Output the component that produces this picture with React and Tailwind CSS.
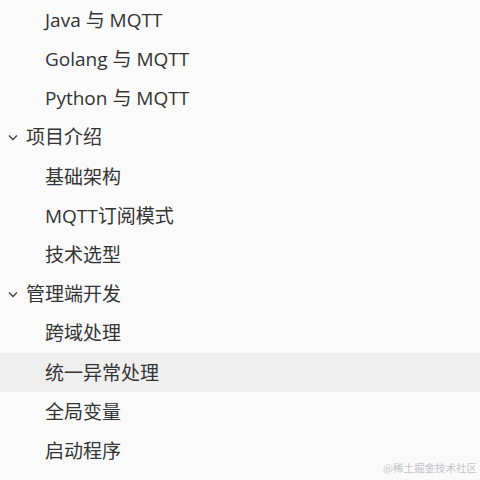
import React from "react";

const font = { fontFamily: '"Open Sans", "Noto Sans CJK SC", sans-serif' };

const rows = [
  { t: "Java 与 MQTT", lvl: 1 },
  { t: "Golang 与 MQTT", lvl: 1 },
  { t: "Python 与 MQTT", lvl: 1 },
  { t: "项目介绍", lvl: 0 },
  { t: "基础架构", lvl: 1 },
  { t: "MQTT订阅模式", lvl: 1 },
  { t: "技术选型", lvl: 1 },
  { t: "管理端开发", lvl: 0 },
  { t: "跨域处理", lvl: 1 },
  { t: "统一异常处理", lvl: 1, active: true },
  { t: "全局变量", lvl: 1 },
  { t: "启动程序", lvl: 1 },
];

function Chevron() {
  return (
    <svg width="10" height="7" viewBox="0 0 10 7" className="mr-[8px]">
      <path d="M1 1.5 L5 5.5 L9 1.5" fill="none" stroke="#444" strokeWidth="1.4" />
    </svg>
  );
}

export default function App() {
  return (
    <div className="relative w-[480px] h-[480px] bg-[#fafafa] overflow-hidden pt-[0.5px]" style={font}>
      {rows.map((r, i) => (
        <div
          key={i}
          className={`flex items-center h-[39.2px] text-[19px] text-[#333333] ${r.active ? "bg-[#efefef]" : ""} ${r.lvl === 0 ? "pl-[8px]" : "pl-[45px]"}`}
        >
          {r.lvl === 0 && <Chevron />}
          <span>{r.t}</span>
        </div>
      ))}
      <div className="absolute right-[3px] bottom-[4px] text-[10.5px] text-[#c4c4c4]" style={{ fontFamily: '"Noto Sans CJK SC", sans-serif' }}>
        @稀土掘金技术社区
      </div>
    </div>
  );
}
